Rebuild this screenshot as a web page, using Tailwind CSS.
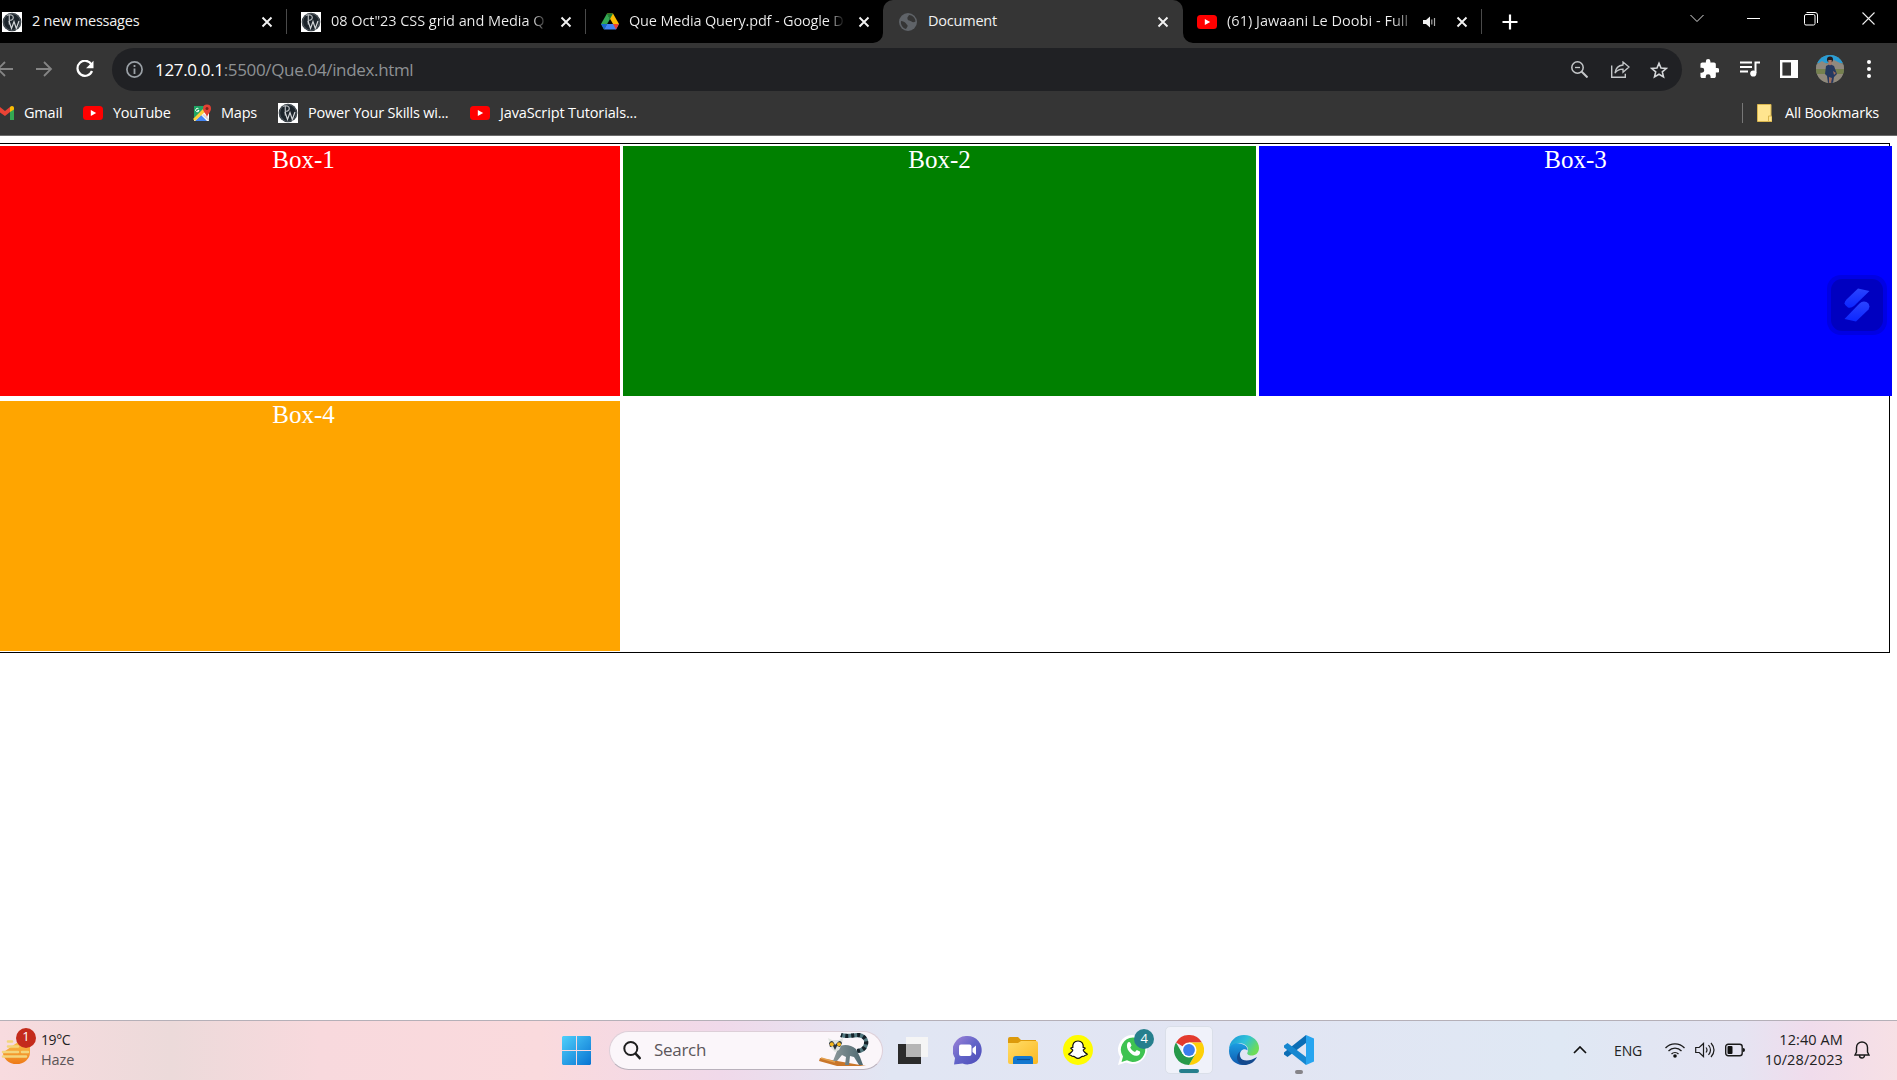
<!DOCTYPE html>
<html lang="en">
<head>
<meta charset="utf-8">
<title>Document</title>
<script src="https://cdn.jsdelivr.net/npm/@tailwindcss/browser@4"></script>
</head>
<body class="h-[1080px] w-[1897px] overflow-hidden bg-white font-['Open_Sans',sans-serif]">
<svg class="absolute size-0">
  <defs>
    <symbol id="pw" viewBox="0 0 20 20"><rect width="20" height="20" fill="#fff"/><circle cx="10" cy="10" r="9.3" fill="#1c242b"/><circle cx="10" cy="10" r="8.4" fill="none" stroke="#8b9297" stroke-width=".5"/><path d="M5 3.200c3-1 6.500-.2 6.300 2.300-.1 2.300-2 3-4 2.700M7.300 3.200v9.300" fill="none" stroke="#b9bdc0" stroke-width="1.200"/><path d="m7 9 2.500 7.500 2.500-7 2.300 7L17 9" fill="none" stroke="#d4d7d9" stroke-width="1.200"/></symbol>
    <symbol id="yt" viewBox="0 0 20 14"><rect width="20" height="14" rx="3.500" fill="#f00"/><path d="M7.800 4v6l5.400-3z" fill="#fff"/></symbol>
    <symbol id="x" viewBox="0 0 12 12"><path d="m1.500 1.500 9 9m0-9-9 9" stroke="#f2f2f2" stroke-width="1.900" fill="none"/></symbol>
    <linearGradient id="gWin" x1="0" y1="0" x2="1" y2="1"><stop stop-color="#4fd0fb"/><stop offset="1" stop-color="#0873d2"/></linearGradient>
    <linearGradient id="gFold" x1="0" y1="0" x2="1" y2="1"><stop stop-color="#ffdc68"/><stop offset="1" stop-color="#fbb922"/></linearGradient>
    <linearGradient id="gTeam" x1="0" y1="0" x2="1" y2="1"><stop stop-color="#a184d8"/><stop offset=".5" stop-color="#6264c8"/><stop offset="1" stop-color="#4c4bb8"/></linearGradient>
    <linearGradient id="gEdgeTop" x1="0" y1="0" x2="1" y2=".5"><stop stop-color="#1a92da"/><stop offset=".55" stop-color="#2fc2d8"/><stop offset="1" stop-color="#6ddc57"/></linearGradient>
    <linearGradient id="gEdge" x1="0" y1="0" x2="0" y2="1"><stop stop-color="#1b9de2"/><stop offset="1" stop-color="#0f59ae"/></linearGradient>
    <linearGradient id="gSun" x1="0" y1="0" x2="0" y2="1"><stop stop-color="#fbc04a"/><stop offset="1" stop-color="#ee7a18"/></linearGradient>
    <linearGradient id="gLemur" x1="0" y1="0" x2="1" y2="0"><stop stop-color="#8a9699"/><stop offset="1" stop-color="#4e6870"/></linearGradient>
    <linearGradient id="gBolt" x1="0" y1="0" x2="0" y2="1"><stop stop-color="#2a44ff"/><stop offset="1" stop-color="#0c26ff"/></linearGradient>
  </defs>
</svg>

<div class="flex h-full flex-col">
  <!-- tab strip -->
  <div class="flex h-[43px] shrink-0 bg-black text-[14.500px] text-[#f1f1f1]">
    <div class="-ml-[12px] flex h-full w-[299px] shrink-0 items-center pl-[14px]">
      <svg class="size-5 shrink-0"><use href="#pw"/></svg>
      <span class="ml-[10px] w-[217px] shrink-0 whitespace-nowrap pb-[2px] tracking-[-0.22px]">2 new messages</span>
      <svg class="ml-[12px] size-3 shrink-0"><use href="#x"/></svg>
      <div class="ml-[13px] h-[25px] w-px shrink-0 bg-[#4a4a4a]"></div>
    </div>
    <div class="flex h-full w-[298px] shrink-0 items-center pl-[14px]">
      <svg class="size-5 shrink-0"><use href="#pw"/></svg>
      <span class="ml-[10px] w-[217px] shrink-0 whitespace-nowrap bg-gradient-to-r from-[#f1f1f1] from-93% to-[#222] to-99% bg-clip-text pb-[2px] tracking-[-0.06px] text-transparent">08 Oct"23 CSS grid and Media Q</span>
      <svg class="ml-[12px] size-3 shrink-0"><use href="#x"/></svg>
      <div class="ml-[13px] h-[25px] w-px shrink-0 bg-[#4a4a4a]"></div>
    </div>
    <div class="flex h-full w-[298px] shrink-0 items-center pl-[16px]">
      <svg class="h-[17px] w-[18px] shrink-0" viewBox="0 0 18 16"><path d="M6 0h6l6 10.500h-6z" fill="#fbbc04"/><path d="M6 0 0 10.500 3 16l6-10.500z" fill="#34a853"/><path d="M6 0h6L9 5.500z" fill="#188038"/><path d="M6 10.500h12L15 16H3z" fill="#4285f4"/><path d="M12 10.500h6L15 16z" fill="#ea4335"/><path d="M0 10.500h6L3 16z" fill="#1967d2"/></svg>
      <span class="ml-[10px] w-[217px] shrink-0 whitespace-nowrap bg-gradient-to-r from-[#f1f1f1] from-92% to-[#111] to-99% bg-clip-text pb-[2px] tracking-[-0.17px] text-transparent">Que Media Query.pdf - Google D</span>
      <svg class="ml-[12px] size-3 shrink-0"><use href="#x"/></svg>
    </div>
    <div class="relative flex h-full w-[300px] shrink-0 items-center rounded-t-[10px] bg-[#353535] pl-[16px]">
      <svg class="absolute bottom-0 -left-[10px] size-[10px]" viewBox="0 0 10 10"><path d="M10 0v10H0A10 10 0 0 0 10 0" fill="#353535"/></svg>
      <svg class="absolute -right-[10px] bottom-0 size-[10px]" viewBox="0 0 10 10"><path d="M0 0v10h10A10 10 0 0 1 0 0" fill="#353535"/></svg>
      <svg class="size-[18px] shrink-0" viewBox="0 0 18 18"><circle cx="9" cy="9" r="9" fill="#5f6368"/><path d="M2 8c2 0 4 1 5 2.500s2 1.500 1.500 3L7 16c-4-1-5.500-5-5-8M10 2c-1 2-2 2-1.500 4s3 1.500 4 2.500 2.500 1 4 0C16.500 5 13.500 2 10 2" fill="#353535"/></svg>
      <span class="ml-[11px] w-[217px] pb-[2px] tracking-[-0.22px]">Document</span>
      <svg class="ml-[12px] size-3 shrink-0"><use href="#x"/></svg>
    </div>
    <div class="flex h-full w-[299px] shrink-0 items-center pl-[14px]">
      <svg class="h-[14px] w-5 shrink-0"><use href="#yt"/></svg>
      <span class="ml-[10px] w-[184px] shrink-0 whitespace-nowrap bg-gradient-to-r from-[#f1f1f1] from-90% to-[#555] to-99% bg-clip-text pb-[2px] tracking-[0.03px] text-transparent">(61) Jawaani Le Doobi - Full</span>
      <svg class="ml-[12px] h-3 w-[13px] shrink-0" viewBox="0 0 13 12"><path d="M0 4h3l4-3.500v11L3 8H0z" fill="#f1f1f1"/><path d="M8.800 3.500v5M11.500 2v8" stroke="#aaa" stroke-width="1.200"/></svg>
      <svg class="ml-[20px] size-3 shrink-0"><use href="#x"/></svg>
      <div class="ml-[13px] h-[25px] w-px shrink-0 bg-[#4a4a4a]"></div>
    </div>
    <div class="flex h-full flex-1 items-center">
      <svg class="ml-[20px] size-[16px]" viewBox="0 0 16 16"><path d="M8 .5v15M.5 8h15" stroke="#fff" stroke-width="2.200"/></svg>
      <div class="ml-auto flex items-center pr-[22px] pb-[6px]">
        <svg class="h-[9px] w-[14px]" viewBox="0 0 14 9"><path d="m.5 1 6.500 6.500L13.500 1" fill="none" stroke="#ddd"/></svg>
        <svg class="ml-[43px] h-3 w-[13px]" viewBox="0 0 13 12"><path d="M0 5.500h13" stroke="#fff"/></svg>
        <svg class="ml-[44px] size-[14px]" viewBox="0 0 14 14"><rect x=".5" y="2.500" width="10.500" height="10.500" rx="1.500" fill="none" stroke="#fff"/><path d="M2.500.500h8.500a2.500 2.500 0 0 1 2.500 2.500v8" fill="none" stroke="#fff"/></svg>
        <svg class="ml-[44px] size-[13px]" viewBox="0 0 13 13"><path d="m.5.5 12 12m0-12-12 12" stroke="#eee" stroke-width="1.100"/></svg>
      </div>
    </div>
  </div>

  <!-- toolbar -->
  <div class="flex h-[53px] shrink-0 items-center bg-[#353535]">
    <svg class="-ml-[4px] mb-px h-[16px] w-[17px]" viewBox="0 0 17 16"><path d="M17 8H2M9 1 2 8l7 7" fill="none" stroke="#858585" stroke-width="1.800"/></svg>
    <svg class="mb-px ml-[23px] h-[16px] w-[17px]" viewBox="0 0 17 16"><path d="M0 8h15M8 1l7 7-7 7" fill="none" stroke="#858585" stroke-width="1.800"/></svg>
    <svg class="mb-px ml-[23px] size-[18px]" viewBox="0 0 18 18"><path d="M15.500 4.500A7.500 7.500 0 1 0 16 11" fill="none" stroke="#fff" stroke-width="2.200"/><path d="M17.500.800v7.400h-7.400z" fill="#fff"/></svg>
    <div class="ml-[18px] flex h-[43px] w-[1570px] items-center rounded-full bg-[#202124]">
      <svg class="ml-[14px] size-[17px]" viewBox="0 0 17 17"><circle cx="8.500" cy="8.500" r="7.600" fill="none" stroke="#9aa0a6" stroke-width="1.700"/><path d="M8.500 7.500V13M8.500 4v2" stroke="#9aa0a6" stroke-width="1.800"/></svg>
      <span class="ml-[12px] whitespace-nowrap text-[17px] tracking-[-0.34px] text-[#8e9194]"><span class="text-white">127.0.0.1</span>:5500/Que.04/index.html</span>
      <svg class="ml-auto size-[17px]" viewBox="0 0 17 17"><circle cx="6.500" cy="6.500" r="5.700" fill="none" stroke="#c4c7c9" stroke-width="1.500"/><path d="M4 6.500h5" stroke="#c4c7c9" stroke-width="1.300"/><path d="m10.500 10.500 6 6" stroke="#c4c7c9" stroke-width="2"/></svg>
      <svg class="ml-[23px] h-[17px] w-[19px]" viewBox="0 0 19 17"><path d="M.700 4.500v11.800h13.600v-3.500" fill="none" stroke="#c4c7c9" stroke-width="1.400"/><path d="M12 1v3C6.500 4.500 4.500 8 4 12c2-2.800 4.500-3.800 8-3.800v3.100L18 6z" fill="none" stroke="#c4c7c9" stroke-width="1.300"/></svg>
      <svg class="mr-[14px] ml-[20px] size-[18px]" viewBox="0 0 18 17"><path d="m9 1.800 2 4.700 5.200.500-3.900 3.400 1.200 5L9 12.700l-4.500 2.700 1.200-5L1.800 7 7 6.500z" fill="none" stroke="#d5d7d9" stroke-width="1.600"/></svg>
    </div>
    <svg class="mb-[2px] ml-[18px] size-[19px]" viewBox="1.500 1 21 21"><path d="M20.500 11H19V7c0-1.100-.9-2-2-2h-4V3.500a2.500 2.500 0 0 0-5 0V5H4c-1.100 0-2 .9-2 2v3.800h1.500a2.700 2.700 0 0 1 0 5.400H2V20c0 1.100.9 2 2 2h3.800v-1.500a2.700 2.700 0 0 1 5.400 0V22H17c1.100 0 2-.9 2-2v-4h1.500a2.500 2.500 0 0 0 0-5" fill="#fff"/></svg>
    <svg class="mb-[2px] ml-[21px] h-[16px] w-5" viewBox="0 0 20 16"><path d="M0 1.500h12M0 6h12M0 10.500h8" stroke="#fff" stroke-width="1.900"/><path d="M15.500 12V1.500H20" fill="none" stroke="#fff" stroke-width="2"/><circle cx="13.300" cy="12.500" r="3.100" fill="#fff"/></svg>
    <svg class="mb-px ml-[20px] size-[18px]" viewBox="0 0 18 18"><rect x="1.200" y="1.200" width="15.600" height="15.600" fill="none" stroke="#fff" stroke-width="2.400"/><path d="M11 0h7v18h-7z" fill="#fff"/></svg>
    <svg class="mb-px ml-[18px] size-[28px] rounded-full" viewBox="0 0 28 28"><path d="M0 0h28v28H0z" fill="#738179"/><path d="M0 0h28v8H0z" fill="#299cd4"/><path d="M0 10 6 6l5 3 7-4 10 5v4H0z" fill="#8f897f"/><path d="M0 14h28v5H0z" fill="#75804f"/><path d="M0 19h28v9H0z" fill="#91897b"/><path d="m10 11 4-2 4 2 3 8-3 3-1 6h-5l-1-7-2-2z" fill="#253960"/><circle cx="14" cy="4.500" r="3" fill="#251b1c"/><path d="M12.300 5h3.400v4l-1.700 1.500L12.300 9z" fill="#a87968"/><path d="m17 16 3 2-2 2zM13 22l3 1-1 5h-2z" fill="#9f6e5c"/></svg>
    <svg class="mb-px ml-[23px] h-[18px] w-1" viewBox="0 0 4 18"><circle cx="2" cy="2" r="2" fill="#fff"/><circle cx="2" cy="9" r="2" fill="#fff"/><circle cx="2" cy="16" r="2" fill="#fff"/></svg>
  </div>

  <!-- bookmarks bar -->
  <div class="flex h-[40px] shrink-0 items-center border-b border-[#6b6b6b] bg-[#353535] pb-[5px] text-[14.500px] tracking-[-0.2px] text-white">
    <svg class="-ml-[4px] h-[14px] w-[18px]" viewBox="0 0 18 14"><path d="M0 2v12h4V5z" fill="#4285f4"/><path d="M14 5v9h4V2z" fill="#34a853"/><path d="M0 2c0-2 2-2.500 3.500-1.300L9 5l5-4v5L9 10 0 3.500z" fill="#ea4335"/><path d="M14 6V1c2-2 4-.5 4 1v1.500z" fill="#fbbc04"/></svg>
    <span class="ml-[10px] w-[59px]">Gmail</span>
    <svg class="h-[14px] w-5"><use href="#yt"/></svg>
    <span class="ml-[10px] w-[80px] tracking-[-0.3px]">YouTube</span>
    <svg class="mb-px h-[18px] w-[18px]" viewBox="0 0 18 18"><path d="M1 2h15v15H1z" fill="#fff"/><path d="M1 2h13v4L1 15z" fill="#1fa463"/><path d="m2 17 6-6 6 6z" fill="#4285f4"/><path d="M0 15 10 5l2 3-10 9z" fill="#fbce3a"/><path d="m11 10 5 5v2l-7-6z" fill="#d8d8d8"/><path d="M5.500 4.800A1.700 1.700 0 1 0 6 6.500H4.500" fill="none" stroke="#fff"/><path d="M14 14c0-4-4-5.500-4-9.500a4 4 0 0 1 8 0c0 4-4 5.500-4 9.500" fill="#e34133"/><circle cx="14" cy="4.500" r="1.500" fill="#7c221b"/></svg>
    <span class="ml-[10px] w-[57px]">Maps</span>
    <svg class="size-5"><use href="#pw"/></svg>
    <span class="ml-[10px] w-[162px] whitespace-nowrap tracking-[-0.22px]">Power Your Skills wi...</span>
    <svg class="h-[14px] w-5"><use href="#yt"/></svg>
    <span class="ml-[10px] whitespace-nowrap tracking-[-0.13px]">JavaScript Tutorials...</span>
    <div class="ml-auto h-[20px] w-px bg-[#777]"></div>
    <svg class="ml-[14px] h-[18px] w-[15px]" viewBox="0 0 15 18"><path d="M.5.500h13.500V12l1 1v4.500H.5z" fill="#ffe58f" stroke="#d9b64e"/><path d="M11.500 17v-5h3" fill="none" stroke="#d9b64e"/></svg>
    <span class="ml-[13px] w-[112px] whitespace-nowrap">All Bookmarks</span>
  </div>

  <!-- page -->
  <main class="relative min-h-0 flex-1 pt-[7px] font-['Liberation_Serif',serif] text-[25px] leading-[28px] text-white">
    <div class="-ml-[16px] grid h-[510px] w-[1906px] grid-cols-[633px_633px_633px] grid-rows-[250px_250px] gap-x-[3px] gap-y-[5px] border border-black p-[2px] text-center">
      <div class="bg-[red]">Box-1</div>
      <div class="bg-[green]">Box-2</div>
      <div class="bg-[blue]">Box-3</div>
      <div class="bg-[orange]">Box-4</div>
    </div>
    <div class="absolute top-[139px] left-[1827px] flex size-[60px] items-center justify-center rounded-[14px] bg-[#0000e4]">
      <div class="flex size-[52px] items-center justify-center rounded-[11px] bg-[#0000c0]">
        <svg class="h-[34px] w-[26px]" viewBox="0 0 26 34"><path d="M14 .500 25.500 3 10 18q-3 2.500-6 1.500Q-2 16 2.500 11.500z" fill="url(#gBolt)"/><path d="M12 33.500.500 31l15-15.500q3-3 7-1.500 4.500 2.500 2 7.500z" fill="url(#gBolt)"/></svg>
      </div>
    </div>
  </main>

  <!-- taskbar -->
  <footer class="flex h-[60px] shrink-0 items-center border-t border-[#b5b0b8] bg-[linear-gradient(90deg,#f8dbdf_0px,#ecdada_170px,#f8d9dd_320px,#fadadd_540px,#f0d9ea_720px,#e1e6f3_890px,#e2e5f3_1250px,#dfe8f4_1560px,#e5e4f2_1740px,#f0dcec_1810px,#f7e0e5_1897px)] text-[15px] text-[#222]">
    <div class="flex w-[562px] items-center">
      <div class="relative h-[40px] w-[41px] shrink-0">
        <svg class="absolute top-[8px] left-[1px] h-[28px] w-[30px]" viewBox="0 0 30 28"><path d="M2 13.500a13.500 11.500 0 0 0 27 0V8l-12-5z" fill="url(#gSun)"/><path d="M7 2.500h4M7 7.500h10M2 13h15m4 0h6M2 17.500h23" stroke="#f3d57c" stroke-width="2.600" stroke-linecap="round"/></svg>
        <div class="absolute -top-[3px] left-[16px] flex size-5 items-center justify-center rounded-full bg-[#c42b1c] pb-px text-[13px] text-white">1</div>
      </div>
      <div class="pb-[2px] leading-[20px]"><div class="text-[14px] tracking-[-0.4px]">19°C</div><div class="text-[14.500px] tracking-[-0.1px] text-[#5c5557]">Haze</div></div>
    </div>
    <svg class="size-[29px] shrink-0" viewBox="0 0 29 29"><path d="M1 0h13v14H0V1zM15 0h13l1 1v13H15zM0 15h14v14H1l-1-1zM15 15h14v13l-1 1H15z" fill="url(#gWin)"/></svg>
    <div class="mb-px ml-[18px] flex h-[39px] w-[274px] items-center rounded-full border border-[#ddcfd8] border-b-[#b9b1bc] bg-[#fbf6fa]">
      <svg class="ml-[13px] h-[19px] w-[18px]" viewBox="0 0 18 19"><circle cx="7.800" cy="7.500" r="6.500" fill="none" stroke="#1e1e1e" stroke-width="2"/><path d="m12.500 12.500 5 5.500" stroke="#1e1e1e" stroke-width="2.600"/></svg>
      <span class="ml-[13px] text-[17px] tracking-[-0.3px] text-[#5b565b]">Search</span>
      <svg class="mr-[13px] ml-auto h-[34px] w-[50px]" viewBox="0 0 50 34"><path d="M1 25 47 33H18L0 28z" fill="#c9762b"/><path d="m2 25 14 4" stroke="#e3a04e" stroke-width="1.500"/><path d="M38 18c10 0 12-12 5-15-6-3-12 2-21-1" fill="none" stroke="#547980" stroke-width="4.200"/><path d="M38 18c10 0 12-12 5-15-6-3-12 2-21-1" fill="none" stroke="#152027" stroke-width="4.200" stroke-dasharray="3 3"/><path d="M17 15c6-4 14-4 20 1l4 8 3 8h-4l-5-8-4-1-1 9h-4l1-8-4-2-5 6h-4l4-10z" fill="url(#gLemur)"/><path d="m9 5 4 2h7l4-2-1 6-3 6-4 2-4-4z" fill="#dfe3df"/><path d="M10 10q3-4 5 0l1 2 2-2q3-4 5 0l-2 4-3-1-2 4-2-4-3 1z" fill="#28333a"/><circle cx="12.800" cy="11.300" r="2" fill="#f4b61b"/><circle cx="20" cy="11.300" r="2" fill="#f4b61b"/></svg>
    </div>
    <div class="ml-[2px] flex w-[442px] items-center">
      <div class="flex w-[55.2px] shrink-0 items-center justify-center"><svg class="size-[30px]" viewBox="0 0 30 30"><path d="M0 8h23v20H0z" fill="#2b2b2b"/><path d="M8 1h22v20H8z" fill="#f5f5f5"/><path d="M8 8h15v13H8z" fill="#b5b5b5"/></svg></div>
      <div class="flex w-[55.2px] shrink-0 items-center justify-center"><svg class="size-[29px]" viewBox="0 0 29 29"><path d="M14.500 0a14.200 14.200 0 1 1-5 27.500L1 28.500 2 22A14.200 14.200 0 0 1 14.500 0" fill="url(#gTeam)"/><rect x="6" y="8.500" width="12.500" height="11.500" rx="2" fill="#fff"/><path d="m19.500 12.500 3.500-3V19l-3.500-3z" fill="#fff"/></svg></div>
      <div class="flex w-[55.2px] shrink-0 items-center justify-center"><svg class="h-[27px] w-[30px]" viewBox="0 0 30 27"><path d="M0 2q0-2 2-2h8l3 3h15v6H0z" fill="#dc9a0b"/><path d="M0 6h10l3-2h15q2 0 2 2v19q0 2-2 2H2q-2 0-2-2z" fill="url(#gFold)"/><path d="M5 27v-5q0-3 3-3h14q3 0 3 3v5z" fill="#1277cf"/><path d="M9 22.500h13" stroke="#0a4f95" stroke-width="1.200"/></svg></div>
      <div class="flex w-[55.2px] shrink-0 items-center justify-center"><svg class="mb-px size-[30px]" viewBox="0 0 30 30"><circle cx="15" cy="15" r="15" fill="#fffc00"/><path d="M15 6c4 0 5.500 3 5.200 6.500.8.300 2 0 2 .8s-2 1-2 1.700c0 1.200 2.800 3.500 4 4 .5.800-2 1.200-2.300 1.400-.3 1-.6 1.200-2.400 1-1.500 0-2.200 1.900-4.500 1.900s-3-1.900-4.500-1.900c-1.800.2-2.100 0-2.400-1C7.800 20.200 5.300 19.800 5.800 19c1.200-.5 4-2.800 4-4 0-.7-2-.9-2-1.700s1.200-.5 2-.8C9.500 9 11 6 15 6" fill="#fff" stroke="#111" stroke-width="1.200"/></svg></div>
      <div class="relative flex w-[55.2px] shrink-0 items-center justify-center"><svg class="mb-px size-[30px]" viewBox="0 0 30 30"><path d="M15 0a14.500 14.500 0 1 1-7 27.500L0 30l2.200-8A14.500 14.500 0 0 1 15 0" fill="#fff"/><path d="M15 2.500a12.200 12.200 0 1 1-6 22.800L3.500 27 5 21.500A12.200 12.200 0 0 1 15 2.500" fill="#3fc351"/><path d="M9.500 8c1-1.500 2.500-1 3 0l1 2.500-1.300 2c1 2.200 2.500 3.500 4.800 4.500l1.800-2 3.200 1.600c.8 3-2 4.400-4 4.200C13 20.500 7 13.500 9.500 8" fill="#fff"/></svg><div class="absolute -top-[6px] left-[28.500px] flex size-5 items-center justify-center rounded-full bg-[#267f8d] pb-px text-[13px] text-white">4</div></div>
      <div class="relative flex w-[55.2px] shrink-0 items-center justify-center"><div class="mb-px flex h-[48px] w-[48px] items-center justify-center rounded-[5px] border border-[#dadfe9] bg-[#f0f2fa]"><svg class="size-[30px]" viewBox="0 0 30 30"><path d="M15 15 2 7.500A15 15 0 0 1 28 7.500H15z" fill="#e33b2e"/><path d="M28 7.500A15 15 0 0 1 15 30l6.500-11.200L15 7.500z" fill="#fdd008"/><path d="M2 7.500A15 15 0 0 0 15 30l6.500-11.200-6.500 3-6.500-3z" fill="#26994a"/><circle cx="15" cy="15" r="7.500" fill="#fff"/><circle cx="15" cy="15" r="5.900" fill="#3b7ded"/></svg></div><div class="absolute bottom-[2px] h-1 w-5 rounded-full bg-[#267f8d]"></div></div>
      <div class="flex w-[55.2px] shrink-0 items-center justify-center"><svg class="mb-px size-[30px]" viewBox="0 0 30 30"><path d="M0 15C0 6 7 0 15 0c9 0 15 6.500 15 13 0 5-3.500 7.500-7.500 7.500-3 0-5-1.500-4-3C21 12 15 7 9 8.500 4 9.500 0 12.500 0 15" fill="url(#gEdgeTop)"/><path d="M0 16C0 9.500 6 7.800 10 8.500c5 .5 9 3 8.500 7-3-3-7.500-.5-7.500 4 0 5 4 8.500 8 9.500C9 32.500 0 25.500 0 16" fill="url(#gEdge)"/><path d="M11.500 16c-4 7 4 14 16.500 6-3 6-8 8-13 8C7 29 6 20 11.500 16" fill="#144a8e"/></svg></div>
      <div class="relative flex w-[55.2px] shrink-0 items-center justify-center"><svg class="mb-px size-[30px]" viewBox="0 0 30 30"><path d="M22 0v8L3.500 22 0 19.500v-2z" fill="#0b6db5"/><path d="M22 30v-8L3.500 8 0 10.500v2z" fill="#1687d0"/><path d="M22 0 30 3.500v23L22 30z" fill="#27a5f0"/></svg><div class="absolute -bottom-[8px] h-1 w-2 rounded-full bg-[#858489]"></div></div>
    </div>
    <div class="ml-auto flex items-center pr-[27px]">
      <svg class="mb-[2px] h-[8px] w-[14px]" viewBox="0 0 14 8"><path d="m1 7 6-6 6 6" fill="none" stroke="#111" stroke-width="1.700"/></svg>
      <span class="ml-[27px] w-[29px] pb-px text-[14px] tracking-[-0.1px]">ENG</span>
      <svg class="mb-[2px] ml-[22px] h-[16px] w-5" viewBox="0 0 20 16"><path d="M.500 6a13 13 0 0 1 19 0M3.500 9a9 9 0 0 1 13 0M6.500 12a5 5 0 0 1 7 0" fill="none" stroke="#1b1b1b" stroke-width="1.300"/><circle cx="10" cy="14" r="1.800" fill="#111"/></svg>
      <svg class="mb-[2px] ml-[10px] h-[16px] w-5" viewBox="0 0 20 16"><path d="M.700 5.500h3.500L8.500 1.500v13l-4.300-4H.700zM11 5.500q2 2.500 0 5M13.500 3q4 5 0 10M16 1q6 7 0 14" fill="none" stroke="#1b1b1b" stroke-width="1.200"/></svg>
      <svg class="mb-[2px] ml-[10px] h-[14px] w-5" viewBox="0 0 20 14"><rect x=".7" y="1.200" width="16.500" height="11.600" rx="2.500" fill="none" stroke="#1b1b1b" stroke-width="1.400"/><rect x="2.500" y="3" width="5" height="8" rx="1" fill="#111"/><path d="M18 5q2 0 2 2t-2 2z" fill="#111"/></svg>
      <div class="ml-[8px] w-[90px] pb-[2px] text-right text-[14.500px] leading-[20px]"><div class="tracking-[0.1px]">12:40 AM</div><div class="tracking-[0.12px]">10/28/2023</div></div>
      <svg class="mb-[2px] ml-[11px] h-[18px] w-[16px]" viewBox="0 0 16 18"><path d="M1 14 2.500 11V6.500a5.500 5.500 0 0 1 11 0V11l1.500 3zM5.500 14.500a2.500 2.500 0 0 0 5 0" fill="none" stroke="#1b1b1b" stroke-width="1.400"/></svg>
    </div>
  </footer>
</div>
</body>
</html>
